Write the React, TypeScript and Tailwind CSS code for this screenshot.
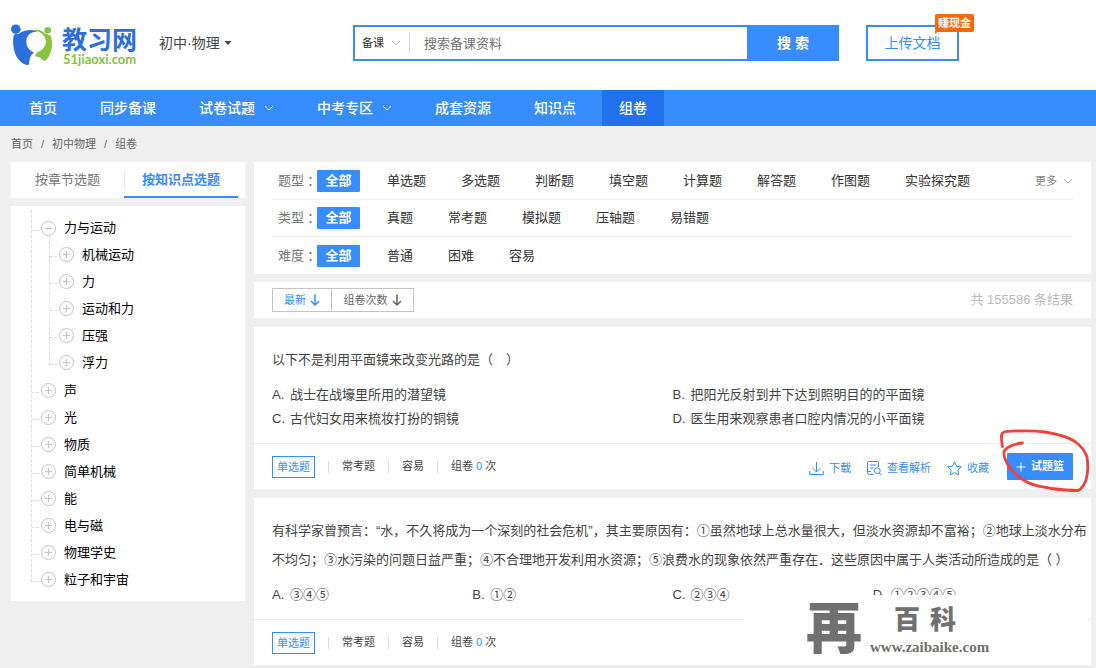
import React from "react";

const navItems = [
  { label: "首页" },
  { label: "同步备课" },
  { label: "试卷试题", menu: true },
  { label: "中考专区", menu: true },
  { label: "成套资源" },
  { label: "知识点" },
  { label: "组卷", active: true },
];

const tree = [
  { label: "力与运动", children: ["机械运动", "力", "运动和力", "压强", "浮力"] },
  { label: "声" },
  { label: "光" },
  { label: "物质" },
  { label: "简单机械" },
  { label: "能" },
  { label: "电与磁" },
  { label: "物理学史" },
  { label: "粒子和宇宙" },
];

const filters = [
  {
    name: "题型",
    more: true,
    options: ["单选题", "多选题", "判断题", "填空题", "计算题", "解答题", "作图题", "实验探究题"],
  },
  { name: "类型", options: ["真题", "常考题", "模拟题", "压轴题", "易错题"] },
  { name: "难度", options: ["普通", "困难", "容易"] },
];

function Chevron({ className = "" }: { className?: string }) {
  return (
    <svg viewBox="0 0 10 6" className={`h-[6px] w-[10px] shrink-0 ${className}`} fill="none" stroke="currentColor" aria-hidden="true">
      <path d="M1 1l4 4 4-4" />
    </svg>
  );
}

function DownArrow() {
  return (
    <svg viewBox="0 0 10 12" className="h-3 w-[10px]" fill="none" stroke="currentColor" strokeWidth="1.5" aria-hidden="true">
      <path d="M5 0.5v10M1 7l4 4 4-4" />
    </svg>
  );
}

function Logo() {
  return (
    <a href="#" className="flex w-32 shrink-0 items-center gap-[9px]">
      <svg viewBox="0 0 42 42" className="h-[42px] w-[42px] shrink-0" aria-hidden="true">
        <circle cx="4.8" cy="5.2" r="4.8" fill="#2a6fdb" />
        <circle cx="36.7" cy="6.2" r="3.3" fill="#86c440" />
        <path
          d="M2.3 14.500C2 10.500 4 9.500 7 10.300C13 6 20 5 27 7.400C19 7.500 15 11.500 15.300 18C15.600 23.500 18.500 26.500 23 28.500C19.500 31 18.300 34.500 18.200 40.600C15 41.600 11.500 40 9 37C4 32 1.500 24 2.300 14.500Z"
          fill="#2a6fdb"
        />
        <path
          d="M20.500 6.300C26 4.800 31 5.800 34 9.500C36 10.500 38.500 10.300 39.700 12C42.300 19 41 28.500 36.500 34.500C34.500 37.300 32.500 37.300 31 35.500C29.500 33.500 27 32.300 24.300 32.400C24.500 30 25.500 28.300 28 27.400C33 25 35.500 20.500 34.700 16C33.500 10 28 6.500 20.500 6.300Z"
          fill="#86c440"
        />
      </svg>
      <span className="flex flex-col pt-1">
        <span className="text-[25px] leading-[25px] font-bold whitespace-nowrap text-[#2a6fdb]">教习网</span>
        <span className="pl-px font-['Lato',sans-serif] text-[13px] leading-[13px] font-bold text-[#86c440]">51jiaoxi.com</span>
      </span>
    </a>
  );
}

function Header() {
  return (
    <header className="flex h-[90px] items-center bg-white pr-[5px] pl-[11px]">
      <div className="flex w-[342px] shrink-0 items-center gap-5">
        <Logo />
        <button type="button" className="flex items-center gap-1 pb-1 text-[14px] text-[#444]">
          初中·物理
          <svg viewBox="0 0 8 4" className="h-1 w-2" fill="currentColor" aria-hidden="true">
            <path d="M0.500 0h7L4 4z" />
          </svg>
        </button>
      </div>
      <form className="flex h-9 max-w-[486px] flex-1 -translate-y-0.5 items-center border-2 border-[#378dfd]">
        <div className="relative flex items-center text-[#b5b5b5]">
          <select aria-label="搜索类型" defaultValue="备课" className="w-[50px] appearance-none bg-transparent pl-[7px] text-[11px] text-[#333] outline-none">
            <option>备课</option>
            <option>试卷</option>
          </select>
          <Chevron className="pointer-events-none absolute right-[4px]" />
        </div>
        <span className="ml-[4px] h-5 w-px bg-[#d5d5d5]" />
        <input
          type="text"
          aria-label="搜索备课资料"
          placeholder="搜索备课资料"
          className="h-full min-w-0 flex-1 px-[14px] text-[13px] outline-none placeholder:text-[#757575]"
        />
        <button type="submit" className="-my-0.5 -mr-0.5 h-9 w-[92px] shrink-0 bg-[#378dfd] text-[14px] font-bold text-white">
          搜 索
        </button>
      </form>
      <div className="relative ml-[27px] shrink-0 -translate-y-0.5">
        <button type="button" className="h-9 w-[93px] border-2 border-[#378dfd] text-[14px] text-[#378dfd]">
          上传文档
        </button>
        <span className="absolute -top-[11px] -right-[15px] h-[18px] rounded-[2px] bg-[#fb6709] px-[3px] text-[11px] leading-[18px] font-bold whitespace-nowrap text-white">
          赚现金
          <svg viewBox="0 0 4 3" className="absolute top-[17px] left-0 h-[3px] w-1" fill="#fb6709" aria-hidden="true">
            <path d="M0 0h4L0 3z" />
          </svg>
        </span>
      </div>
    </header>
  );
}

function Nav() {
  return (
    <nav className="flex h-9 gap-[9px] bg-[#378dfd] pl-3 text-[14px] font-medium text-white">
      {navItems.map((item) => (
        <a
          key={item.label}
          href="#"
          className={item.active ? "flex items-center gap-[9px] bg-[#2271ec] px-[17px]" : "flex items-center gap-[9px] px-[17px]"}
        >
          {item.label}
          {item.menu && <Chevron />}
        </a>
      ))}
    </nav>
  );
}

function Toggle({ open }: { open?: boolean }) {
  return (
    <svg viewBox="0 0 15 15" className="mr-2 ml-[2px] h-[15px] w-[15px] shrink-0" fill="none" stroke="#c4c4c4" aria-hidden="true">
      <circle cx="7.5" cy="7.5" r="7" />
      <path d={open ? "M4 7.500h7" : "M4 7.500h7M7.500 4v7"} strokeWidth="1.2" />
    </svg>
  );
}

function TreeRow({ label, open, tall = true }: { label: string; open?: boolean; tall?: boolean }) {
  return (
    <button type="button" className={tall ? "flex h-[27px] items-center text-[13px]" : "flex h-[26px] items-center text-[13px]"}>
      <span className="mt-1 w-[7px] border-t border-dashed border-[#ddd]" />
      <Toggle open={open} />
      {label}
    </button>
  );
}

function Sidebar() {
  return (
    <aside className="flex w-[234px] shrink-0 flex-col gap-2">
      <div role="tablist" className="flex h-9 items-center bg-white text-[13px]">
        <button type="button" role="tab" aria-selected="false" className="h-full w-[113px] text-[#777]">
          按章节选题
        </button>
        <span className="-mr-px h-[18px] w-px bg-[#e8e8e8]" />
        <button type="button" role="tab" aria-selected="true" className="h-full w-[114px] border-b-2 border-[#378dfd] pt-0.5 font-bold text-[#378dfd]">
          按知识点选题
        </button>
      </div>
      <div className="bg-white pt-[9px] pb-2 pl-[20px] text-black">
        <ul className="relative pl-px">
          <span className="absolute -top-[5px] bottom-[11px] left-0 border-l border-dashed border-[#ddd]" />
          {tree.map((node) => (
            <li key={node.label}>
              <TreeRow label={node.label} open={!!node.children} tall={!node.children} />
              {node.children && (
                <ul className="relative ml-[17px] pb-px pl-px">
                  <span className="absolute -top-[5px] bottom-[12px] left-0 border-l border-dashed border-[#ddd]" />
                  {node.children.map((child) => (
                    <li key={child}>
                      <TreeRow label={child} />
                    </li>
                  ))}
                </ul>
              )}
            </li>
          ))}
        </ul>
      </div>
    </aside>
  );
}

function Filters() {
  return (
    <section className="divide-y divide-[#f0f0f0] bg-white px-[18px] pt-px text-[13px]">
      {filters.map((row) => (
        <div key={row.name} className="flex h-[37px] items-center pl-[6px]">
          <span className="flex w-[39px] items-center whitespace-nowrap text-[#777]">
            {row.name}
            <span lang="ja" className="font-['Noto_Sans_CJK_JP',sans-serif]">
              ：
            </span>
          </span>
          <button type="button" className="mr-[27px] h-[22px] w-[43px] rounded-[1px] bg-[#378dfd] font-bold text-white">
            全部
          </button>
          <div className="flex gap-[35px] text-[#333]">
            {row.options.map((option) => (
              <button key={option} type="button" className="whitespace-nowrap">
                {option}
              </button>
            ))}
          </div>
          {row.more && (
            <button type="button" className="ml-auto flex items-center gap-[6px] text-[11px] text-[#888]">
              更多 <Chevron className="text-[#aaa]" />
            </button>
          )}
        </div>
      ))}
    </section>
  );
}

function SortBar() {
  return (
    <section className="flex h-9 items-center justify-between bg-white px-[18px]">
      <div className="flex h-6 border border-[#c4c4c4] text-[11px]">
        <button type="button" className="flex w-[59px] items-center justify-center gap-1 border-r border-[#c4c4c4] text-[#378dfd]">
          最新 <DownArrow />
        </button>
        <button type="button" className="flex w-[81px] items-center justify-center gap-1 text-[#666]">
          组卷次数 <DownArrow />
        </button>
      </div>
      <span className="text-[13px] text-[#bbb]">共 155586 条结果</span>
    </section>
  );
}

function Option({ letter, text }: { letter: string; text: string }) {
  return (
    <li className="flex">
      <span className="w-[18px] shrink-0">{letter}.</span>
      {text}
    </li>
  );
}

function Actions() {
  return (
    <div className="ml-auto flex items-center text-[11px] text-[#378dfd]">
      <a href="#" className="mr-4 flex items-center gap-[5px] pt-[3px]">
        <svg viewBox="0 0 15 15" className="h-[15px] w-[15px]" fill="none" stroke="currentColor" aria-hidden="true">
          <path d="M7.500 1v9.500M3.500 7l4 4 4-4M0.700 10v3.500h13.600V10" />
        </svg>
        下载
      </a>
      <a href="#" className="mr-4 flex items-center gap-[5px] pt-[3px]">
        <svg viewBox="0 0 15 15" className="h-[15px] w-[15px]" fill="none" stroke="currentColor" aria-hidden="true">
          <path d="M6.500 13.500H2.500a2 2 0 0 1-2-2V1.500a1 1 0 0 1 1-1h9a1 1 0 0 1 1 1v4.500M3 4h6M3 7h3.500M0.500 10.500h3.500" />
          <circle cx="10.300" cy="9.700" r="2.900" />
          <path d="M12.300 11.900l2.200 2.300" />
        </svg>
        查看解析
      </a>
      <a href="#" className="mr-[18px] flex items-center gap-[5px] pt-[3px]">
        <svg viewBox="0 0 15 15" className="h-[15px] w-[15px]" fill="none" stroke="currentColor" strokeLinejoin="round" aria-hidden="true">
          <path d="M7.500 0.800l2 4.400 4.800.6-3.500 3.300.9 4.800-4.200-2.400-4.200 2.400.9-4.800L.7 5.800l4.800-.6z" />
        </svg>
        收藏
      </a>
      <div className="relative">
        <button type="button" className="flex h-[27px] w-[66px] items-center justify-center gap-[5px] rounded-[1px] bg-[#378dfd] font-bold text-white">
          <svg viewBox="0 0 10 10" className="h-[10px] w-[10px]" fill="none" stroke="currentColor" aria-hidden="true">
            <path d="M5 0.500v9M0.500 5h9" />
          </svg>
          试题篮
        </button>
        <svg
          viewBox="0 0 92 66"
          className="pointer-events-none absolute -top-[25px] -left-[8px] z-10 h-[66px] w-[92px]"
          fill="none"
          stroke="#f5403a"
          strokeWidth="2.800"
          strokeLinecap="round"
          strokeLinejoin="round"
          aria-hidden="true"
        >
          <path d="M3.300 18.500C3 14 2 10 2.500 7C3 4 6 3.200 12 3.200C22 2.700 36 2.500 46 4C58 6 70 9.500 76 13.500C82 18 86.500 24 88 29C89 36 89 44 87.500 50C86.500 55 83 61 79 62.500C68 62.500 60 61.500 52 60.500C42 58.500 33 57.500 27 53.500C20 50 11 42 8 35C5 29 4 25 5.500 22.500C8 19.500 15 15.500 23.500 15" />
        </svg>
      </div>
    </div>
  );
}

function Bar() {
  return <span className="h-3 w-px bg-[#ddd]" />;
}

function Meta({ children }: { children?: React.ReactNode }) {
  return (
    <footer className="flex h-[46px] items-center gap-[13px] border-t border-[#ededed] px-[18px] text-[11px] text-[#444]">
      <span className="border border-[#378dfd] px-1 leading-5 text-[#378dfd]">单选题</span>
      <Bar />
      <span>常考题</span>
      <Bar />
      <span>容易</span>
      <Bar />
      <span>
        组卷 <span className="text-[#378dfd]">0</span> 次
      </span>
      {children}
    </footer>
  );
}

function Watermark() {
  return (
    <div className="absolute top-[97px] right-[3px] flex h-[67px] w-[344px] items-center gap-2 bg-white pl-[62px] text-[#707070]">
      <span className="text-[56px] leading-[62px] font-black">再</span>
      <span className="flex flex-col gap-1 pt-1">
        <span className="flex gap-[10px] pl-6 text-[26px] leading-[28px] font-black">
          <span>百</span>
          <span>科</span>
        </span>
        <span className="font-['Liberation_Serif',serif] text-[15px] leading-[18px] font-bold">www.zaibaike.com</span>
      </span>
    </div>
  );
}

export default function App() {
  return (
    <div lang="zh-CN" className="min-h-screen bg-[#efefef] font-['Liberation_Sans','Noto_Sans_CJK_SC',sans-serif]">
      <Header />
      <Nav />
      <div className="pr-[5px] pl-[11px]">
        <nav aria-label="面包屑" className="flex h-9 items-center gap-2 text-[11px] text-[#666]">
          <a href="#">首页</a>
          <span>/</span>
          <a href="#">初中物理</a>
          <span>/</span>
          <a href="#">组卷</a>
        </nav>
        <div className="flex items-start gap-[9px]">
          <Sidebar />
          <main className="flex min-w-0 flex-1 flex-col gap-[9px]">
            <div className="flex flex-col gap-2">
              <Filters />
              <SortBar />
            </div>
            <article className="bg-white">
              <div className="pt-[18px] pb-3 pl-[18px] text-[13px] text-[#444]">
                <p className="leading-[29px]">以下不是利用平面镜来改变光路的是（　）</p>
                <ul className="mt-[9px] mr-[18px] grid grid-cols-2 leading-6">
                  <Option letter="A" text="战士在战壕里所用的潜望镜" />
                  <Option letter="B" text="把阳光反射到井下达到照明目的的平面镜" />
                  <Option letter="C" text="古代妇女用来梳妆打扮的铜镜" />
                  <Option letter="D" text="医生用来观察患者口腔内情况的小平面镜" />
                </ul>
              </div>
              <Meta>
                <Actions />
              </Meta>
            </article>
            <article className="relative bg-white">
              <div className="pt-[18px] pb-3 pl-[18px] text-[13px] text-[#444]">
                <p className="leading-[29px]">
                  有科学家曾预言：“水，不久将成为一个深刻的社会危机”，其主要原因有：①虽然地球上总水量很大，但淡水资源却不富裕；②地球上淡水分布不均匀；③水污染的问题日益严重；④不合理地开发利用水资源；⑤浪费水的现象依然严重存在．这些原因中属于人类活动所造成的是（ ）
                </p>
                <ul className="mt-[9px] mr-[18px] grid grid-cols-4 leading-6">
                  <Option letter="A" text="③④⑤" />
                  <Option letter="B" text="①②" />
                  <Option letter="C" text="②③④" />
                  <Option letter="D" text="①②③④⑤" />
                </ul>
              </div>
              <Meta />
              <Watermark />
            </article>
          </main>
        </div>
      </div>
    </div>
  );
}
